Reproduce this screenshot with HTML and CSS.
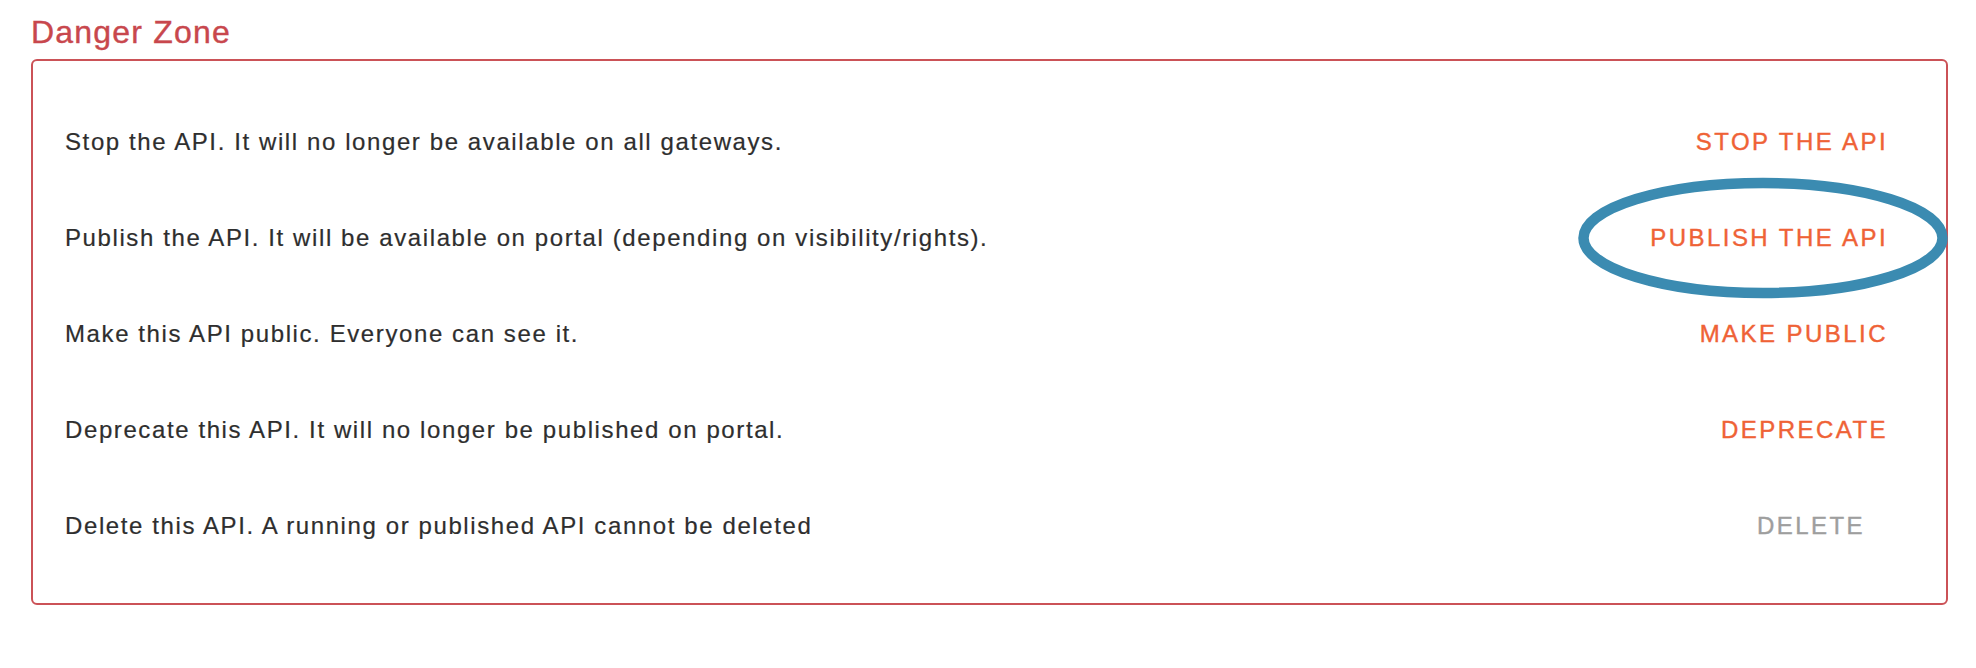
FILE: index.html
```html
<!DOCTYPE html>
<html lang="en">
<head>
<meta charset="utf-8">
<title>Danger Zone</title>
<link rel="stylesheet" href="styles.css">
</head>
<body>
<div class="page">
  <h2 class="zone-title">Danger Zone</h2>
  <div class="zone-box">
    <div class="zone-row">
      <span class="zone-text">Stop the API. It will no longer be available on all gateways.</span>
      <button class="zone-btn">STOP THE API</button>
    </div>
    <div class="zone-row">
      <span class="zone-text">Publish the API. It will be available on portal (depending on visibility/rights).</span>
      <button class="zone-btn">PUBLISH THE API</button>
    </div>
    <div class="zone-row">
      <span class="zone-text">Make this API public. Everyone can see it.</span>
      <button class="zone-btn">MAKE PUBLIC</button>
    </div>
    <div class="zone-row">
      <span class="zone-text">Deprecate this API. It will no longer be published on portal.</span>
      <button class="zone-btn">DEPRECATE</button>
    </div>
    <div class="zone-row">
      <span class="zone-text">Delete this API. A running or published API cannot be deleted</span>
      <button class="zone-btn zone-btn-disabled" disabled>DELETE</button>
    </div>
  </div>
  <svg class="highlight" width="380" height="132" viewBox="0 0 380 132">
    <ellipse cx="190" cy="66" rx="179.5" ry="55" fill="none" stroke="#3b8bb1" stroke-width="10.5"/>
  </svg>
</div>
</body>
</html>
```

FILE: styles.css
```css
html, body {
  margin: 0;
  padding: 0;
  background: #ffffff;
}

.page {
  position: relative;
  width: 1976px;
  height: 668px;
  font-family: "Liberation Sans", Arial, Helvetica, sans-serif;
}

.zone-title {
  margin: 0 0 7px 31px;
  padding-top: 12px;
  font-size: 32px;
  line-height: 40px;
  font-weight: normal;
  letter-spacing: 1.2px;
  color: #c8474d;
  -webkit-text-stroke: 0.4px #c8474d;
}

.zone-box {
  margin-left: 31px;
  width: 1917px;
  border: 2px solid #cb5257;
  border-radius: 6px;
  padding: 33px 44px 29px 32px;
  box-sizing: border-box;
  display: flex;
  flex-direction: column;
}

.zone-row {
  height: 96px;
  display: flex;
  align-items: center;
  justify-content: space-between;
}

.zone-text {
  font-size: 24px;
  letter-spacing: 1.6px;
  color: #2e2e2e;
  -webkit-text-stroke: 0.2px #2e2e2e;
}

.zone-btn {
  font-family: "Liberation Sans", Arial, Helvetica, sans-serif;
  font-size: 24px;
  letter-spacing: 2.45px;
  color: #ef6236;
  -webkit-text-stroke: 0.4px #ef6236;
  background: transparent;
  border: none;
  padding: 0 16px;
  margin-right: -2px;
  cursor: pointer;
}

.zone-btn-disabled {
  color: #9e9e9e;
  -webkit-text-stroke: 0.4px #9e9e9e;
  margin-right: 21px;
  cursor: default;
}

.highlight {
  position: absolute;
  left: 1573px;
  top: 172px;
}
```
